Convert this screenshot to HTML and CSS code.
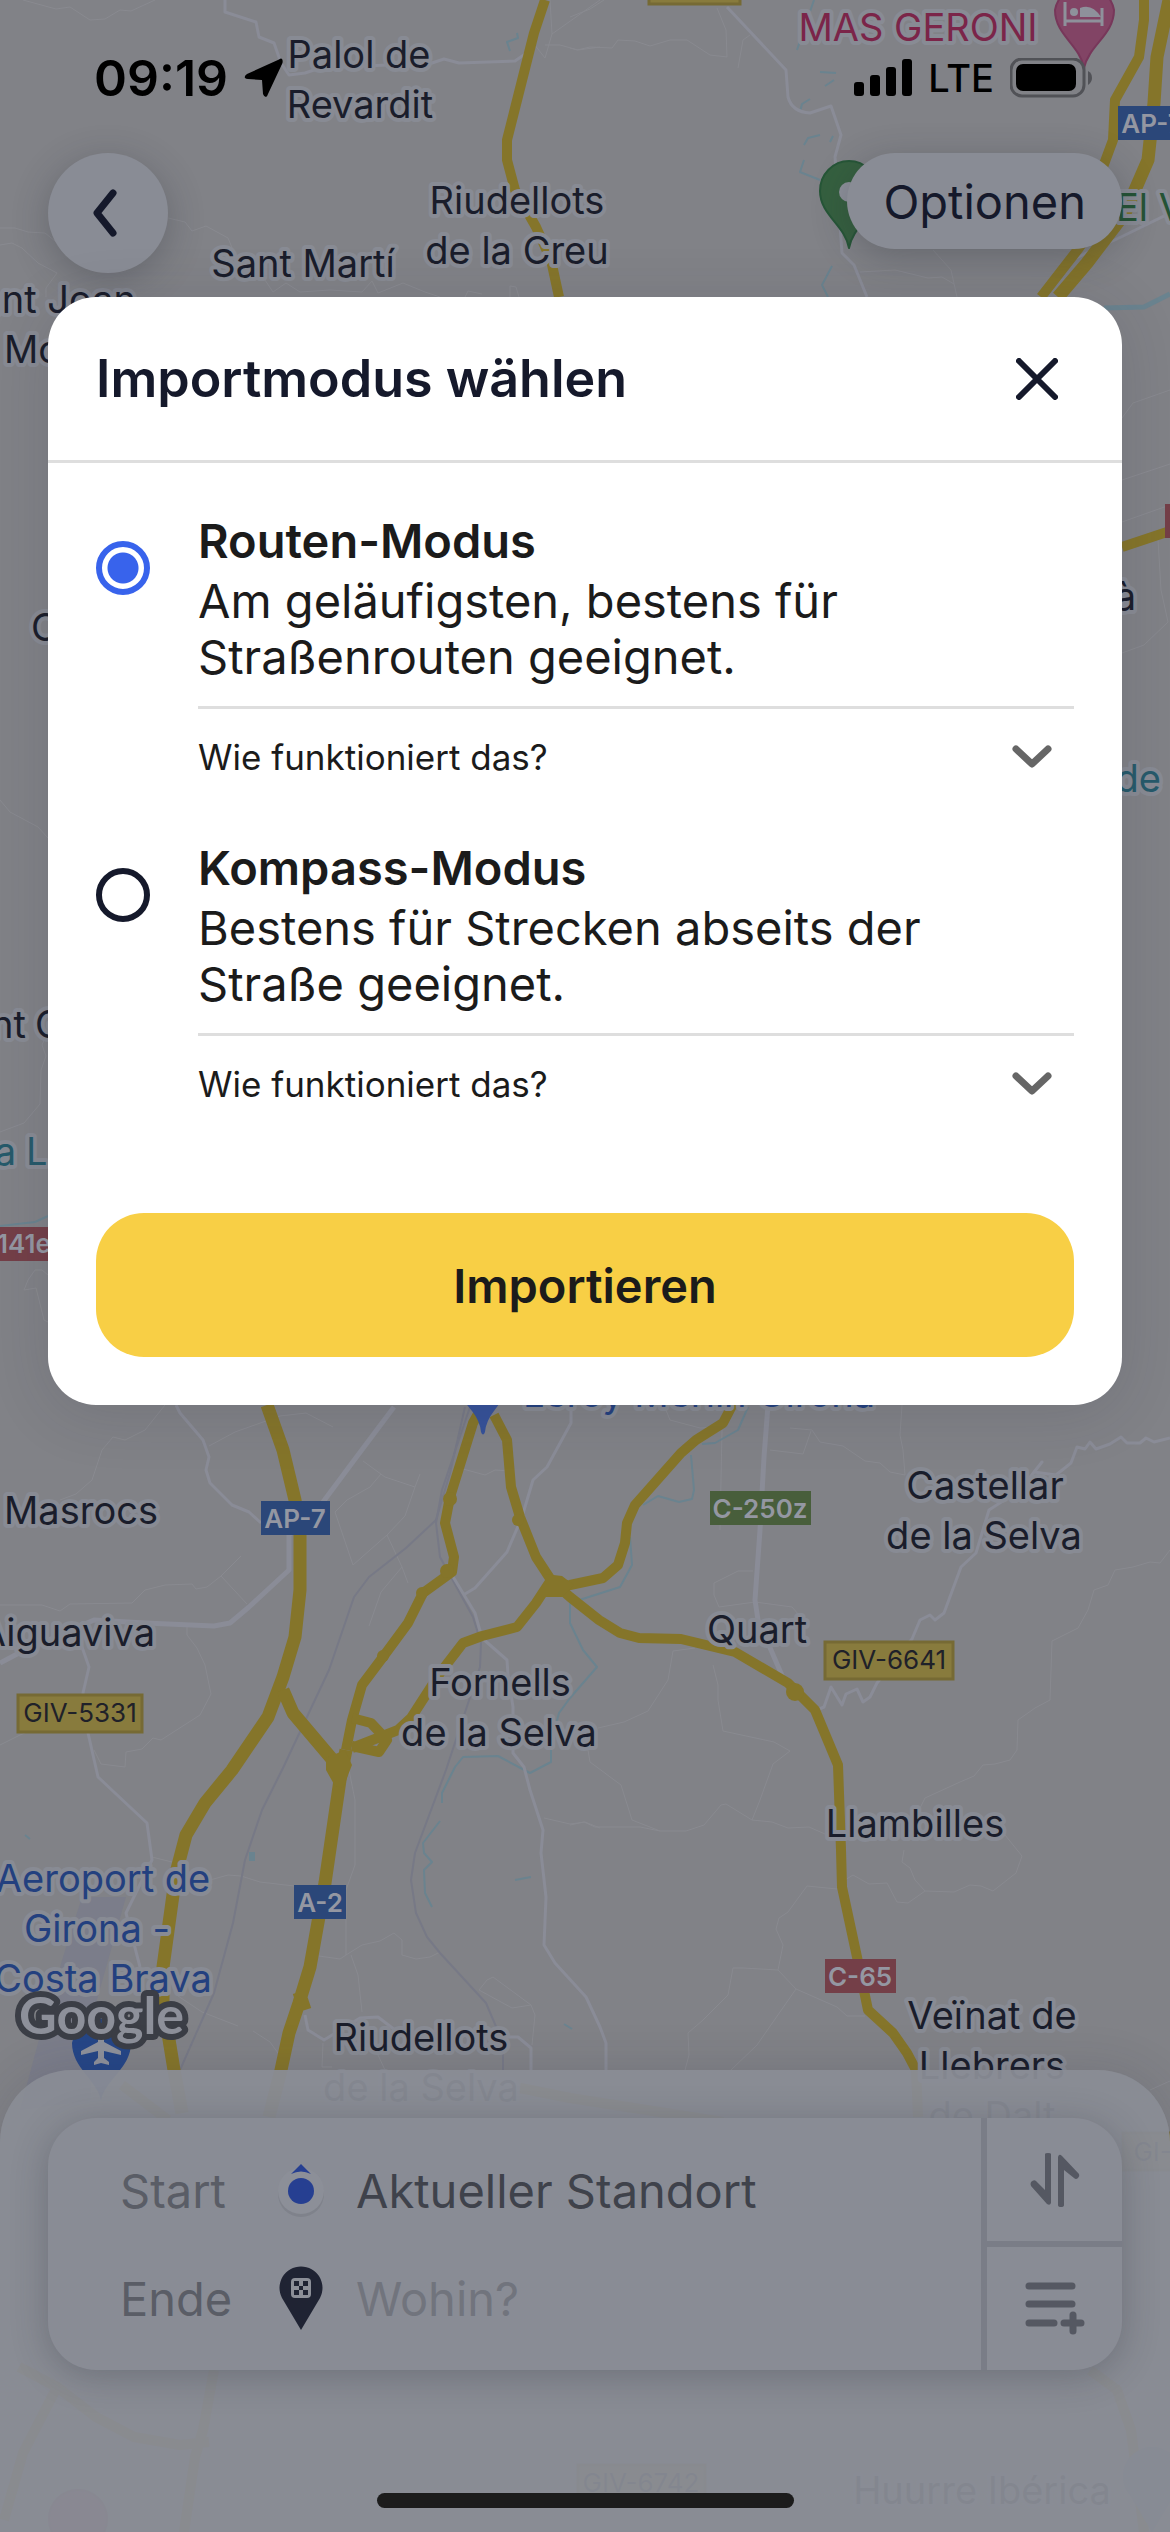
FILE: index.html
```html
<!DOCTYPE html>
<html lang="de">
<head>
    <meta charset="UTF-8">
    <meta name="viewport" content="width=device-width, initial-scale=1.0">
    <title>Importmodus wählen</title>
    <link rel="stylesheet" href="styles.css">
</head>
<body>
    <div class="screen">
        <!-- map -->
        <svg class="map" viewBox="0 0 1170 2532" preserveAspectRatio="xMidYMin slice" aria-hidden="true">
            <path class="airport" d="M82 1897L126 1897L96 2003L90 2100L20 2110L38 2043L63 1957Z"/>
            <g class="minor">
                <path d="M23 0L56 9L70 7L90 20L105 19L120 10L131 11L155 0"/>
                <path d="M0 228H15L28 232L45 233L60 245M0 245L12 243L22 248L38 263L57 273L46 288V297"/>
                <path d="M168 218L185 222L192 231L206 226L228 238L233 250M265 280L273 292L286 283L300 292L330 290L362 292L372 281L378 293L403 283L425 292L440 297M465 297L468 291L482 294M510 297V286L516 287L519 297"/>
                <path d="M550 0L552 34L600 0M534 44L545 58L552 34M545 45L560 45L578 50L600 47"/>
                <path d="M570 48L577 50L590 47L612 48L618 40L635 41L650 46L670 40L687 40L710 55L727 57L726 30L717 8M750 35L743 40L738 68M570 17L590 9L604 0"/>
                <path d="M933 250L951 270L957 297M860 272L895 270L928 278L942 277L954 284"/>
                <path d="M1122 418L1133 403L1170 390M1122 480L1170 464M1122 522L1170 505M1158 540L1161 590L1168 622L1144 645L1122 653"/>
                <path d="M0 800L10 812L38 827L48 838M48 1030L42 1045L46 1056L41 1070L40 1104L24 1123L0 1132M48 1275L42 1270L35 1270L28 1280L24 1290L36 1288L44 1320L48 1322"/>
                <path d="M165 1405L145 1430L125 1440L113 1437L102 1450L92 1480L76 1494L60 1500"/>
                <path d="M209 1446L235 1432L280 1416L306 1413L333 1427"/>
                <path d="M0 1605L42 1605L60 1611L70 1604L132 1603L145 1590L165 1585L192 1584L196 1589L207 1587L221 1576L241 1556M221 1576L247 1604"/>
                <path d="M187 1627L187 1635L197 1648L205 1665L211 1694L200 1715L161 1740L153 1738L142 1749L126 1752L125 1767L101 1764L94 1750"/>
                <path d="M0 1745L20 1735L50 1722M363 1461L385 1477L415 1487L405 1516L387 1535L353 1565L335 1512L347 1500L370 1487L381 1474M415 1487L420 1474M387 1535L402 1567L408 1583M402 1567L381 1592L369 1626"/>
                <path d="M463 1469L485 1475L495 1470L510 1471"/>
                <path d="M666 1410L670 1420L700 1428L722 1427M722 1430L720 1530M790 1428L812 1430L820 1442L843 1446L865 1461L880 1463L890 1472L905 1475L903 1450L900 1435L902 1405M811 1431L803 1454L770 1450"/>
                <path d="M714 1583L714 1595L719 1607L755 1602L792 1607L799 1615M714 1583L738 1571L753 1571M695 1648L673 1651L668 1680L648 1711L624 1722L598 1728"/>
                <path d="M713 1665L718 1685L718 1700L723 1731L774 1742L790 1751L773 1764L760 1800L752 1820L726 1804L721 1805L704 1825L686 1831L660 1831L632 1820L621 1785L590 1762L588 1750"/>
                <path d="M570 1825L584 1822L595 1827L640 1827L660 1831M752 1820L772 1822L788 1828L809 1827L825 1834"/>
                <path d="M1170 1550L1160 1563L1150 1562L1133 1567L1115 1570L1108 1585L1094 1590L1088 1610L1078 1628L1052 1641L1050 1700L1035 1708L1018 1720L1017 1750L1010 1760L995 1764L983 1765L974 1776L960 1782L925 1798L920 1808"/>
                <path d="M845 1880L853 1875L869 1884L887 1883L897 1902L908 1903L925 1891L954 1892L970 1885L981 1886L993 1891L1016 1873L1022 1856L1005 1835M925 1891L915 1880L910 1868L902 1862L904 1850"/>
                <path d="M837 1889L807 1886L796 1901L788 1912L779 1918L776 1929L783 1945L778 1970L743 1968L733 1968L728 1995L703 2020L688 2033L689 2055L685 2070M778 1970L796 1989L837 2007L847 2016L865 2016M796 1989L757 2045L731 2070"/>
                <path d="M343 1740L355 1800L355 1865L346 1890L346 1955L340 1959L319 1956M346 1955L362 1945L380 1941L394 1933L402 1940L402 1955L416 1959L430 1957L440 1952M351 1955L358 1975L362 2012"/>
                <path d="M210 1880L228 1875L241 1876L260 1882L294 1886M544 1818L570 1824L585 1822L600 1828M479 1990L487 1980L493 1977L531 2005L535 2015L532 2045M479 1990L512 2008L531 2005"/>
                <path d="M152 1857L172 1862M178 1996L202 2012L238 2026M253 2031L270 2042L278 2053M323 2043L322 2067L332 2067M378 2055L385 2070M1150 2090L1170 2081"/>
            </g>
            <g class="rail">
                <path d="M465 1407L450 1473L436 1520L406 1548L369 1577L354 1597L329 1670L283 1768L262 1810L245 1860L233 1923L214 1993L180 2070"/>
                <path d="M470 1407L442 1490L436 1523L440 1557L473 1617L481 1643L480 1667L446 1770L415 1853L411 1880L416 1913L427 1937L440 1953L486 2003L503 2043V2070"/>
            </g>
            <g class="water">
                <path d="M748 1407L738 1430L715 1443L702 1444M691 1455L694 1490L692 1499L679 1502L658 1496L643 1505M630 1537L632 1565L620 1587L570 1603V1623L583 1650L597 1667L570 1698L559 1713L551 1743V1762L530 1773L498 1756L463 1757L455 1767L442 1793V1803"/>
                <path d="M440 1821L423 1843L424 1853L432 1862L424 1870L425 1893L432 1907M515 1880L531 1877M25 1835L30 1839M564 2024L572 2029"/>
                <path d="M814 0L797 50M810 99L802 104L800 112M820 135L808 138L804 145M833 136L830 142M804 160L800 172L820 180M832 266L822 285L828 297M820 72L836 73M825 86L834 80M517 33L518 38L507 42L510 51"/>
                <path d="M0 1226L35 1222L48 1216"/>
                <path class="wide" d="M1104 308L1144 307L1170 294"/>
            </g>
            <rect class="pond" x="249" y="1852" width="6" height="9"/>
            <g class="road">
                <path d="M225 0V12L256 22L259 37L274 43L281 63L289 75L305 73L320 68L432 63L444 59L459 63L515 61L528 52L530 40"/>
                <path d="M727 7L786 70L788 97Q792 112 810 113L831 106L841 135L835 157L842 253L854 265L867 297"/>
                <path d="M1076 258L1121 237L1170 213"/>
                <path d="M176 1405L180 1413L203 1440L209 1457L206 1470L210 1483L232 1505L249 1512L261 1523"/>
                <path class="wide" d="M394 1407L358 1455L323 1502L289 1535V1570L249 1607L230 1623L214 1626L145 1623L94 1620L60 1635L19 1653L0 1663"/>
                <path d="M82 1647L89 1667L83 1693L88 1733L98 1777L115 1793L147 1823L152 1860L126 1913L140 1967"/>
                <path d="M571 1405V1423L547 1467L533 1480L522 1517L507 1552L475 1588L465 1594M452 1575L475 1613L482 1638L507 1660L508 1675L513 1707V1753L524 1767L530 1790L543 1830L541 1853L546 1897L544 1945L555 1963L586 1997L600 2027L606 2043V2075"/>
                <path class="wide" d="M768 1405L764 1457L760 1530L755 1600L758 1620L784 1680"/>
                <path d="M1170 1438L1154 1442L1146 1438L1140 1443H1127L1121 1437L1110 1444L1096 1449L1090 1442L1085 1449L1077 1447L1071 1463L1056 1475L1034 1472L1042 1462L1020 1490L989 1510L976 1553L961 1567L944 1613L935 1620L930 1615L920 1620L912 1639L877 1683L870 1697L863 1702L857 1689L846 1694L842 1705L831 1687L824 1707L817 1710"/>
                <path d="M305 2015L308 2030L324 2040L360 2018L378 2017L395 2030M508 2037H518L531 2048V2070"/>
            </g>
            <g class="highway">
                <path d="M545 0L534 33L507 140V160L515 190L536 227L551 260L559 297"/>
                <path d="M1144 0V20L1139 57L1115 100L1113 140L1100 175L1105 210L1079 248L1041 297"/>
                <path class="big" d="M1169 0L1157 57L1154 103L1148 160L1125 213L1087 263L1058 297"/>
                <path d="M1122 547L1170 531"/>
                <path class="big" d="M267 1405L283 1450L295 1500L300 1533V1590L295 1637L283 1677L268 1717L232 1770L205 1803L186 1835L176 1873L163 1967V2003L174 2070L182 2113"/>
                <path class="big" d="M283 1690L293 1713L337 1765"/>
                <path d="M483 1405L473 1423L450 1497L445 1523L454 1557L452 1572L423 1593L408 1623L383 1657L362 1685L352 1720L346 1750"/>
                <path class="big" d="M346 1750L340 1780L325 1883L310 1967L299 2003L289 2033L281 2070L269 2117M299 1992L305 2010"/>
                <path d="M494 1415L507 1440L511 1487L520 1517L536 1557L551 1580L536 1603L517 1627L482 1636L463 1643L440 1673L411 1718L398 1730L352 1748M352 1718L371 1723L387 1740L379 1752L352 1746"/>
                <path d="M551 1587L570 1585L603 1578L618 1565L625 1543L627 1523L635 1505L681 1453L696 1440L723 1423L735 1400"/>
                <path d="M551 1580L570 1597L599 1620L620 1633L639 1638L681 1639L735 1652L788 1683L815 1710L838 1765L841 1850L842 1887L857 1957L868 2010L893 2033L907 2053L916 2070L918 2117"/>
                <path d="M122 2085L168 2120M520 2088L570 2098L723 2122M214 2370L203 2430L195 2457L184 2532M19 2367L57 2387L96 2417L134 2437L180 2445L209 2442M57 2387L23 2453L4 2520M1090 2370L1117 2390L1131 2430L1144 2532"/>
                <path class="knot" d="M326 1758L345 1750L352 1765L343 1788L335 1786L326 1770ZM545 1574L562 1576L574 1585L562 1597L545 1597Z"/>
                <circle cx="450" cy="1499" r="7"/><circle cx="447" cy="1571" r="7"/><circle cx="422" cy="1593" r="6"/><circle cx="518" cy="1520" r="6"/>
                <circle cx="383" cy="1656" r="6"/><circle cx="795" cy="1692" r="9"/>
            </g>
            <!-- pins -->
            <path class="pin-pink" d="M1084 68C1080 45 1055 35 1055 10A30 30 0 0 1 1114 10C1114 35 1089 45 1084 68Z"/>
            <path class="pin-glyph" d="M1065 2V26M1065 21H1102M1102 26V8"/>
            <circle class="pin-dot" cx="1074" cy="12" r="4"/>
            <path class="pin-fill" d="M1080 8Q1092 3 1101 17H1080Z"/>
            <path class="pin-green" d="M849 248C845 225 820 215 820 191A29 30 0 0 1 878 191C878 215 853 225 849 248Z"/>
            <circle class="pin-dot" cx="849" cy="192" r="10"/>
            <path class="pin-blue" d="M463 1400H502L494 1411Q486 1421 485 1432Q483 1437 481 1432Q480 1421 472 1411Z"/>
            <path class="pin-airport" d="M101 2100C97 2080 72 2068 72 2043A30 30 0 0 1 131 2043C131 2068 105 2080 101 2100Z"/>
            <path class="plane" d="M98 2032Q101 2025 104 2032V2042L121 2051V2055L104 2051V2058L109 2062V2065L101 2063L94 2065V2062L98 2058V2051L81 2055V2051L98 2042Z"/>
            <circle class="pin-pink" cx="78" cy="2519" r="29"/>
            <path class="pin-grey" d="M1152 2532L1130 2495A29 29 0 1 1 1174 2495Z"/>
            <!-- road shields -->
            <g class="shields">
                <rect class="yellow" x="649" y="-20" width="91" height="24"/>
                <rect class="blue" x="1118" y="106" width="68" height="34"/><text x="1152" y="133">AP-7</text>
                <rect class="blue" x="261" y="1501" width="69" height="34"/><text x="295" y="1528">AP-7</text>
                <rect class="blue" x="294" y="1885" width="52" height="34"/><text x="320" y="1912">A-2</text>
                <rect class="green" x="710" y="1491" width="101" height="34"/><text x="760" y="1518">C-250z</text>
                <rect class="red" x="825" y="1959" width="71" height="34"/><text x="860" y="1986">C-65</text>
                <rect class="red" x="-40" y="1227" width="96" height="34"/><text x="24" y="1253">141e</text>
                <rect class="red" x="1165" y="504" width="60" height="34"/>
                <g class="dark">
                    <rect class="yellow" x="18" y="1695" width="124" height="37"/><text x="80" y="1722">GIV-5331</text>
                    <rect class="yellow" x="825" y="1642" width="128" height="37"/><text x="889" y="1669">GIV-6641</text>
                    <rect class="yellow" x="578" y="2465" width="127" height="37"/><text x="641" y="2492">GIV-6742</text>
                    <rect class="yellow" x="1123" y="2133" width="90" height="37"/><text x="1168" y="2161">GI-67</text>
                </g>
            </g>
            <g class="places">
                <text x="359" y="68">Palol de</text><text x="360" y="118">Revardit</text>
                <text x="517" y="214">Riudellots</text><text x="517" y="264">de la Creu</text>
                <text x="303" y="277">Sant Martí</text>
                <text class="right" x="136" y="313">Sant Joan</text><text class="left" x="4" y="363">Mollet</text>
                <text class="left" x="31" y="641">C</text>
                <text class="right" x="26" y="1038">Sant</text><text class="left" x="35" y="1038">G</text>
                <text class="right" x="1136" y="610">à</text>
                <text x="81" y="1524">Masrocs</text><text class="right" x="155" y="1646">Aiguaviva</text>
                <text x="500" y="1696">Fornells</text><text x="499" y="1746">de la Selva</text>
                <text x="985" y="1499">Castellar</text><text x="984" y="1549">de la Selva</text>
                <text x="757" y="1643">Quart</text><text x="915" y="1837">Llambilles</text>
                <text x="421" y="2051">Riudellots</text><text x="421" y="2101">de la Selva</text>
                <text x="992" y="2029">Veïnat de</text><text x="992" y="2079">Llebrers</text><text x="992" y="2129">de Dalt</text>
                <text x="982" y="2504">Huurre Ibérica</text>
                <g class="pink"><text x="918" y="41">MAS GERONI</text></g>
                <g class="forest"><text class="left" x="1116" y="221">El V</text></g>
                <g class="teal"><text class="right" x="16" y="1165">a</text><text class="left" x="26" y="1165">L</text><text class="right" x="1161" y="792">de</text></g>
                <g class="navy">
                    <text x="699" y="1407">Leroy Merlin Girona</text>
                    <text x="103" y="1892">Aeroport de</text><text x="97" y="1942">Girona -</text><text x="103" y="1992">Costa Brava</text>
                </g>
            </g>
            <text class="google" x="19" y="2034">Google</text>
        </svg>

        <!-- status bar -->
        <header class="status">
            <div class="status-left">
                <span class="time">09:19</span>
                <svg width="40" height="40" viewBox="0 0 40 40"><path d="M35 1.500L3 16Q0 18 1 20Q2 21 4 21L18 22L19 36Q20 39 22 39Q23 39 24 36L38.500 5Q39 2 38 1Q37 0 35 1.500Z"/></svg>
            </div>
            <div class="status-right">
                <svg width="58" height="38" viewBox="0 0 58 38"><rect y="23" width="10" height="14" rx="3"/><rect x="16" y="16" width="10" height="21" rx="3"/><rect x="32" y="8" width="10" height="29" rx="3"/><rect x="48" width="10" height="37" rx="3"/></svg>
                <span class="network">LTE</span>
                <svg width="82" height="40" viewBox="0 0 82 40"><rect class="battery-frame" x="1" y="1" width="73" height="37" rx="11"/><rect x="6" y="6" width="60" height="27" rx="7"/><path class="battery-tip" d="M78 13Q82 15 82 20Q82 24 78 27Z"/></svg>
            </div>
        </header>

        <nav class="topbar">
            <button class="back" type="button" aria-label="Zurück">
                <svg width="24" height="48" viewBox="0 0 24 48"><path d="M20 4L4 24L20 44"/></svg>
            </button>
            <button class="options" type="button">Optionen</button>
        </nav>

        <!-- dialog -->
        <form class="dialog" role="dialog" aria-labelledby="dialog-title">
            <div class="dialog-head">
                <h1 id="dialog-title">Importmodus wählen</h1>
                <button class="close" type="button" aria-label="Schließen">
                    <svg width="42" height="42" viewBox="0 0 42 42"><path d="M3 3L39 39M39 3L3 39"/></svg>
                </button>
            </div>
            <div class="dialog-body">
                <div class="mode">
                    <input type="radio" name="mode" id="mode-road" checked>
                    <div class="mode-info">
                        <label for="mode-road"><strong>Routen-Modus</strong><span>Am geläufigsten, bestens für Straßenrouten geeignet.</span></label>
                        <button class="how" type="button">Wie funktioniert das?
                            <svg width="40" height="24" viewBox="0 0 40 24"><path d="M4 4L20 19L36 4"/></svg>
                        </button>
                    </div>
                </div>
                <div class="mode">
                    <input type="radio" name="mode" id="mode-compass">
                    <div class="mode-info">
                        <label for="mode-compass"><strong>Kompass-Modus</strong><span>Bestens für Strecken abseits der Straße geeignet.</span></label>
                        <button class="how" type="button">Wie funktioniert das?
                            <svg width="40" height="24" viewBox="0 0 40 24"><path d="M4 4L20 19L36 4"/></svg>
                        </button>
                    </div>
                </div>
                <button class="import" type="submit">Importieren</button>
            </div>
        </form>

        <!-- route sheet -->
        <section class="sheet">
            <div class="route">
                <div class="fields">
                    <div class="field">
                        <label for="start">Start</label>
                        <svg width="54" height="72" viewBox="0 0 54 72"><circle class="halo-shadow" cx="27" cy="40" r="23"/><circle class="halo" cx="27" cy="37" r="23"/><circle class="dot" cx="27" cy="37" r="13"/><path class="dot" d="M27 10L37 20Q27 15 17 20Z"/></svg>
                        <input type="text" id="start" value="Aktueller Standort">
                    </div>
                    <div class="field">
                        <label for="end">Ende</label>
                        <svg width="54" height="72" viewBox="0 0 54 72">
                            <path class="end-pin" d="M27 68L8 36A21.500 21.500 0 1 1 46 36Z"/>
                            <rect class="flag" x="17" y="16" width="20" height="20" rx="4"/>
                            <path class="end-pin" d="M20 19h5v5h-5zM29 19h5v5h-5zM25 24h4v4h-4zM20 28h5v5h-5zM29 28h5v5h-5z"/>
                        </svg>
                        <input type="text" id="end" placeholder="Wohin?">
                    </div>
                </div>
                <div class="actions">
                    <button type="button" aria-label="Richtung tauschen">
                        <svg width="50" height="56" viewBox="0 0 50 56"><path class="solid" d="M15 2Q15 1 18 1Q21 1 21 2V51Q20 54 17 52L1 34Q0 32 1 30Q4 27 6 29L15 38ZM28 5Q29 1 32 4L49 22Q50 24 48 26Q46 28 44 26L34 18V53Q34 55 31 55Q28 55 28 53Z"/></svg>
                    </button>
                    <button type="button" aria-label="Zwischenstopp hinzufügen">
                        <svg width="60" height="54" viewBox="0 0 60 54"><path d="M4 4H47M4 22H47M4 41H29M39 41H56M48 33V49"/></svg>
                    </button>
                </div>
            </div>
            <div class="home"></div>
        </section>
    </div>
</body>
</html>
```
FILE: styles.css
```css
* {
    margin: 0;
    padding: 0;
    box-sizing: border-box;
}
body {
    font-family: Inter, "Liberation Sans", sans-serif;
    background-color: #818287;
    color: #1b1b1b;
}
button, input {
    font-family: inherit;
    border: 0;
    background: none;
    color: inherit;
}
svg {
    display: block;
    flex: none;
}
.screen {
    position: relative;
    min-height: 100vh;
    display: flex;
    flex-direction: column;
    overflow: hidden;
}

/* map */
.map {
    position: absolute;
    top: 0;
    left: 0;
    width: 100%;
    height: 100%;
    z-index: -1;
}
.map path {
    fill: none;
    stroke-linejoin: round;
}
.map .airport {
    fill: #7b7d8a;
}
.minor {
    stroke: #898a90;
    stroke-width: 1;
}
.rail {
    stroke: #777986;
    stroke-width: 2;
}
.water {
    stroke: #6a838f;
    stroke-width: 2;
}
.water .wide {
    stroke-width: 5;
}
.pond {
    fill: #6a838f;
}
.road {
    stroke: #8a8c97;
    stroke-width: 3;
}
.road .wide {
    stroke-width: 5;
}
.highway {
    stroke: #85752a;
    stroke-width: 10;
}
.highway .big {
    stroke-width: 13;
}
.highway circle, .map .knot {
    fill: #85752a;
    stroke: none;
}
.map .pin-pink {
    fill: #824465;
    stroke: #77375a;
    stroke-width: 2;
}
.map .pin-green {
    fill: #35603f;
    stroke: #265637;
    stroke-width: 2;
}
.map .pin-blue {
    fill: #36529a;
}
.map .pin-grey {
    fill: #5f6f80;
}
.map .pin-airport {
    fill: #254687;
}
.map .pin-glyph {
    stroke: #8e919b;
    stroke-width: 3;
}
.pin-dot, .map .pin-fill, .map .plane {
    fill: #8e919b;
}
.shields text {
    fill: #9497a2;
    font-size: 26px;
    font-weight: 600;
    text-anchor: middle;
}
.shields .dark text {
    fill: #1f2129;
    font-weight: 400;
}
.shields .blue {
    fill: #2b4779;
}
.shields .green {
    fill: #485e3b;
}
.shields .red {
    fill: #743f48;
}
.shields .yellow {
    fill: #887b3d;
    stroke: #766a34;
    stroke-width: 3;
}
.places {
    fill: #1a1d2b;
    stroke: #888b94;
    stroke-width: 8;
    stroke-linejoin: round;
    paint-order: stroke;
    font-size: 38px;
    text-anchor: middle;
}
.places .left {
    text-anchor: start;
}
.places .right {
    text-anchor: end;
}
.places .pink {
    fill: #7b2549;
}
.places .forest {
    fill: #245335;
}
.places .teal {
    fill: #265a6b;
}
.places .navy {
    fill: #23407f;
}
.google {
    font-family: Lato, sans-serif;
    font-size: 52px;
    font-weight: 700;
    fill: #8d909a;
    stroke: #3b3e46;
    stroke-width: 12;
    stroke-linejoin: round;
    paint-order: stroke;
}

/* status bar */
.status {
    height: 153px;
    padding: 48px 78px 0 94px;
    display: flex;
    justify-content: space-between;
    align-items: flex-start;
    color: #000;
}
.status-left, .status-right {
    height: 60px;
    display: flex;
    align-items: center;
    gap: 16px;
}
.time {
    font-size: 50px;
    font-weight: 600;
}
.network {
    font-size: 38px;
    font-weight: 500;
}
.battery-frame {
    fill: none;
    stroke: #515257;
    stroke-width: 3;
}
.battery-tip {
    fill: #515257;
}

/* top buttons */
.topbar {
    padding: 0 48px;
    height: 120px;
    display: flex;
    justify-content: space-between;
    align-items: flex-start;
}
.back, .options {
    background-color: #898c95;
    color: #15192b;
    box-shadow: 0 8px 36px rgba(40, 42, 54, 0.3);
}
.back {
    width: 120px;
    height: 120px;
    padding-left: 45px;
    border-radius: 50%;
}
.back path, .close path, .how path, .actions path {
    fill: none;
    stroke: currentColor;
    stroke-width: 7;
    stroke-linecap: round;
    stroke-linejoin: round;
}
.options {
    height: 96px;
    padding: 0 36px;
    border-radius: 48px;
    font-size: 47px;
}

/* dialog */
.dialog {
    margin: 24px 48px 0;
    background-color: #fff;
    border-radius: 48px;
    box-shadow: 0 8px 60px rgba(40, 42, 54, 0.15);
}
.dialog-head {
    height: 166px;
    padding: 0 64px 0 48px;
    display: flex;
    justify-content: space-between;
    align-items: center;
    border-bottom: 3px solid #dedede;
    color: #15192b;
}
.dialog-head h1 {
    font-size: 52px;
    font-weight: 600;
}
.close path {
    stroke-width: 6;
}
.dialog-body {
    padding: 48px;
}
.mode {
    display: flex;
    align-items: flex-start;
    gap: 48px;
    padding-bottom: 46px;
}
.mode input {
    appearance: none;
    flex: none;
    width: 54px;
    height: 54px;
    margin-top: 30px;
    border: 6px solid #15192b;
    border-radius: 50%;
}
.mode input:checked {
    border-color: #3863ec;
    background: radial-gradient(circle, #3863ec 15px, #fff 16px);
}
.mode-info {
    flex: 1;
    min-width: 0;
    padding-top: 2px;
}
.mode label {
    display: block;
    padding-bottom: 21px;
    font-size: 47px;
    line-height: 56px;
}
.mode strong, .mode label span {
    display: block;
}
.mode strong {
    font-weight: 600;
    padding-bottom: 4px;
}
.how {
    width: 100%;
    height: 86px;
    padding: 12px 22px 0 0;
    display: flex;
    justify-content: space-between;
    align-items: center;
    border-top: 3px solid #dedede;
    font-size: 35px;
}
.how svg {
    color: #666;
}
.import {
    display: block;
    width: 100%;
    height: 144px;
    margin-top: 48px;
    border-radius: 48px;
    background-color: #f8cf45;
    font-size: 47px;
    font-weight: 600;
}

/* route sheet */
.sheet {
    margin-top: auto;
    padding: 48px 48px 24px;
    border-radius: 72px 72px 0 0;
    background-color: rgba(137, 140, 149, 0.95);
    box-shadow: 0 0 48px rgba(40, 42, 54, 0.15);
}
.route {
    display: flex;
    height: 252px;
    border-radius: 48px;
    overflow: hidden;
    background-color: #898c95;
    box-shadow: 0 6px 36px rgba(40, 42, 54, 0.28);
}
.fields {
    flex: 1;
    min-width: 0;
    display: flex;
    flex-direction: column;
    justify-content: center;
    padding-left: 72px;
}
.field {
    height: 108px;
    display: flex;
    align-items: center;
    font-size: 47px;
    color: #5a5d66;
}
.field label {
    flex: none;
    width: 154px;
}
.field input {
    flex: 1;
    min-width: 0;
    margin-left: 28px;
    font-size: 47px;
    color: #3f424b;
}
.field input::placeholder {
    color: #71747d;
    opacity: 1;
}
.halo-shadow {
    fill: #7f828b;
}
.halo {
    fill: #8c8f98;
}
.dot {
    fill: #263f91;
}
.end-pin {
    fill: #1f2333;
}
.flag {
    fill: #8c8f98;
}
.actions {
    flex: none;
    width: 141px;
    display: flex;
    flex-direction: column;
    border-left: 6px solid #7a7d87;
    color: #555862;
}
.actions button {
    flex: 1;
    display: flex;
    justify-content: center;
    align-items: center;
}
.actions button + button {
    border-top: 6px solid #7a7d87;
}
.actions .solid {
    fill: currentColor;
    stroke: none;
}
.home {
    width: 417px;
    height: 15px;
    margin: 123px auto 0;
    border-radius: 8px;
    background-color: #1c1c1c;
}
```
